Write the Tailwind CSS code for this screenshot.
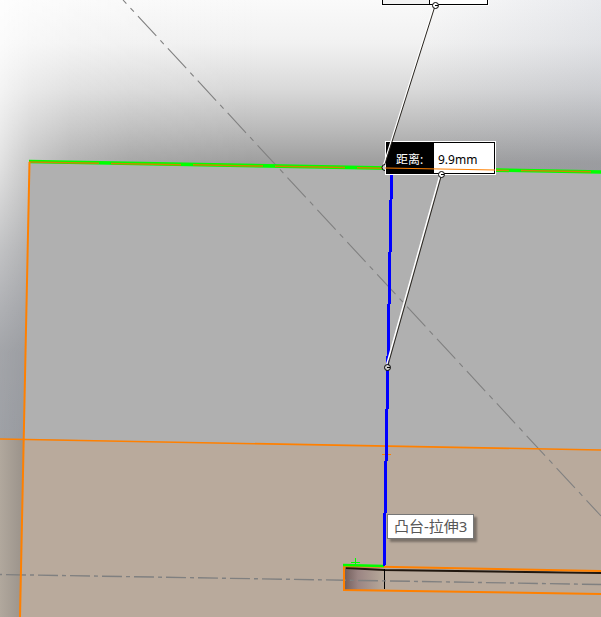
<!DOCTYPE html>
<html lang="zh-CN">
<head>
<meta charset="utf-8">
<meta name="viewport" content="width=device-width, initial-scale=1">
<title>距离测量</title>
<script src="https://cdn.jsdelivr.net/npm/@tailwindcss/browser@4"></script>
</head>
<body class="bg-[#b9aa9c]">
<main class="relative h-screen w-full overflow-hidden font-['Noto_Sans','Noto_Sans_CJK_SC',sans-serif]">
  <svg class="absolute inset-0 h-full w-full" aria-hidden="true">
    <defs>
      <linearGradient id="sky" x1="0" y1="0" x2="0" y2="440" gradientUnits="userSpaceOnUse">
        <stop offset="0" stop-color="#fafafa"/>
        <stop offset=".1" stop-color="#f1f1f1"/>
        <stop offset=".2" stop-color="#dadada"/>
        <stop offset=".3" stop-color="#b8b8b8"/>
        <stop offset=".37" stop-color="#9e9e9e"/>
        <stop offset=".7" stop-color="#8f9196"/>
        <stop offset="1" stop-color="#898c92"/>
      </linearGradient>
      <linearGradient id="glow" x1="0" y1="0" x2="260" y2="0" gradientUnits="userSpaceOnUse">
        <stop offset="0" stop-color="#fff" stop-opacity=".7"/>
        <stop offset=".12" stop-color="#fff" stop-opacity=".43"/>
        <stop offset=".27" stop-color="#fff" stop-opacity=".23"/>
        <stop offset=".5" stop-color="#fff" stop-opacity=".09"/>
        <stop offset="1" stop-color="#fff" stop-opacity="0"/>
      </linearGradient>
      <linearGradient id="fade" x1="0" y1="0" x2="0" y2="440" gradientUnits="userSpaceOnUse">
        <stop offset="0" stop-color="#fff"/>
        <stop offset=".37" stop-color="#fff"/>
        <stop offset=".57" stop-color="#fff" stop-opacity=".6"/>
        <stop offset=".8" stop-color="#fff" stop-opacity=".28"/>
        <stop offset="1" stop-color="#fff" stop-opacity=".26"/>
      </linearGradient>
      <mask id="glow-mask" maskUnits="userSpaceOnUse" x="0" y="0" width="260" height="440">
        <rect width="260" height="440" fill="url(#fade)"/>
      </mask>
      <linearGradient id="cool" x1="420" y1="0" x2="601" y2="30" gradientUnits="userSpaceOnUse">
        <stop offset="0" stop-color="#8b93a8" stop-opacity="0"/>
        <stop offset="1" stop-color="#8b93a8" stop-opacity=".16"/>
      </linearGradient>
      <linearGradient id="side" x1="0" y1="0" x2="24" y2="0" gradientUnits="userSpaceOnUse">
        <stop offset="0" stop-color="#b1a89d"/>
        <stop offset="1" stop-color="#9a928a"/>
      </linearGradient>
      <linearGradient id="slot" x1="344" y1="0" x2="384" y2="0" gradientUnits="userSpaceOnUse">
        <stop offset="0" stop-color="#715d5b"/>
        <stop offset=".35" stop-color="#9b8583"/>
        <stop offset="1" stop-color="#b7a99a"/>
      </linearGradient>
    </defs>

    <!-- Background -->
    <rect width="100%" height="440" fill="url(#sky)"/>
    <rect x="420" width="100%" height="180" fill="url(#cool)"/>
    <rect width="260" height="440" fill="url(#glow)" mask="url(#glow-mask)"/>

    <!-- Part faces -->
    <path d="M29 162 601 172 1200 183V461L24 439Z" fill="#b0b0b0"/>
    <path d="M0 439 601 450 1200 461V1400H0Z" fill="#b9aa9c"/>
    <path d="M0 439H24L20 617H0Z" fill="url(#side)"/>

    <!-- Slot -->
    <path d="M344 567H384V590H344Z" fill="url(#slot)"/>
    <path d="M346 568 384 570 601 573" fill="none" stroke="#20170f" stroke-width="2"/>
    <path d="M384.500 569V589" stroke="#000"/>

    <!-- Centre lines -->
    <g fill="none" stroke="#808080">
      <path d="M123 0 601 516" stroke-dasharray="27 6 5 6" stroke-dashoffset="22" stroke-width="1.100"/>
      <path d="M0 574.500 601 584.500" stroke-width="1.400" stroke-dasharray="20 4 4 4" stroke-dashoffset="26"/>
    </g>

    <!-- Edges -->
    <path d="M29 161.500 601 172" stroke="#0f0" stroke-width="3.600"/>
    <path d="M29 162 601 172" stroke="#c98a00" stroke-width="1.500" stroke-dasharray="70 12"/>
    <g fill="none" stroke="#ff8000" stroke-width="2">
      <path d="M29.500 162 20 617"/>
      <path d="M0 439 601 450" stroke-width="1.600"/>
      <path d="M601 571 344 566V590L601 594"/>
      <path d="M382 454.500H391" stroke-width="1"/>
    </g>
    <path d="M343 565 384 566" stroke="#0f0" stroke-width="2.500"/>
    <path d="M355.500 558V566M351 562.500H360" stroke="#0f0"/>

    <!-- Measured distance -->
    <path d="M391.500 174 384 566" stroke="#00f" stroke-width="3" shape-rendering="crispEdges"/>
  </svg>

  <div class="absolute -top-7 left-[381px] flex h-[34px] w-[108px] border border-white">
    <div class="w-12 border border-black bg-[#f3f3f3]"></div>
    <div class="-ml-px flex-1 border border-black bg-white"></div>
  </div>

  <div class="absolute top-[141px] left-[385px] flex h-[34px] w-[111px] border border-white text-xs">
    <div class="flex w-12 items-center bg-black pt-1 pl-2.5 text-white">距离:</div>
    <div class="flex flex-1 items-center border border-l-0 border-black bg-white pt-1 pl-1 text-black">9.9mm</div>
  </div>

  <svg class="absolute inset-0 h-full w-full" aria-hidden="true">
    <path d="M385 168 495 170" stroke="#ff8000" stroke-width="1.200"/>
    <g fill="none">
      <path d="M434 6 383 167M440 175 386 367" stroke="#fff" stroke-width="1.500"/>
      <path d="M435 6 384 167M441.500 175 387.500 367" stroke="#29251f"/>
    </g>
    <g fill="#fff" stroke="#000">
      <circle cx="435.500" cy="5.500" r="3"/>
      <path d="M385 164.500A3 3 0 0 0 385 170.500" fill="#ccc"/>
      <circle cx="441.500" cy="174.500" r="3"/>
      <circle cx="387.500" cy="367.500" r="3" fill="#ccc"/>
      <path d="M435 5.500H438M441 174.500H444M387 367.500H390"/>
    </g>
  </svg>

  <div role="tooltip" class="absolute top-[514px] left-[387px] border border-[#767676] bg-white px-1.5 text-[15px] leading-[23px] whitespace-nowrap text-[#575757] shadow-[3px_3px_2px_#7b7269]">凸台-拉伸3</div>
</main>
</body>
</html>
